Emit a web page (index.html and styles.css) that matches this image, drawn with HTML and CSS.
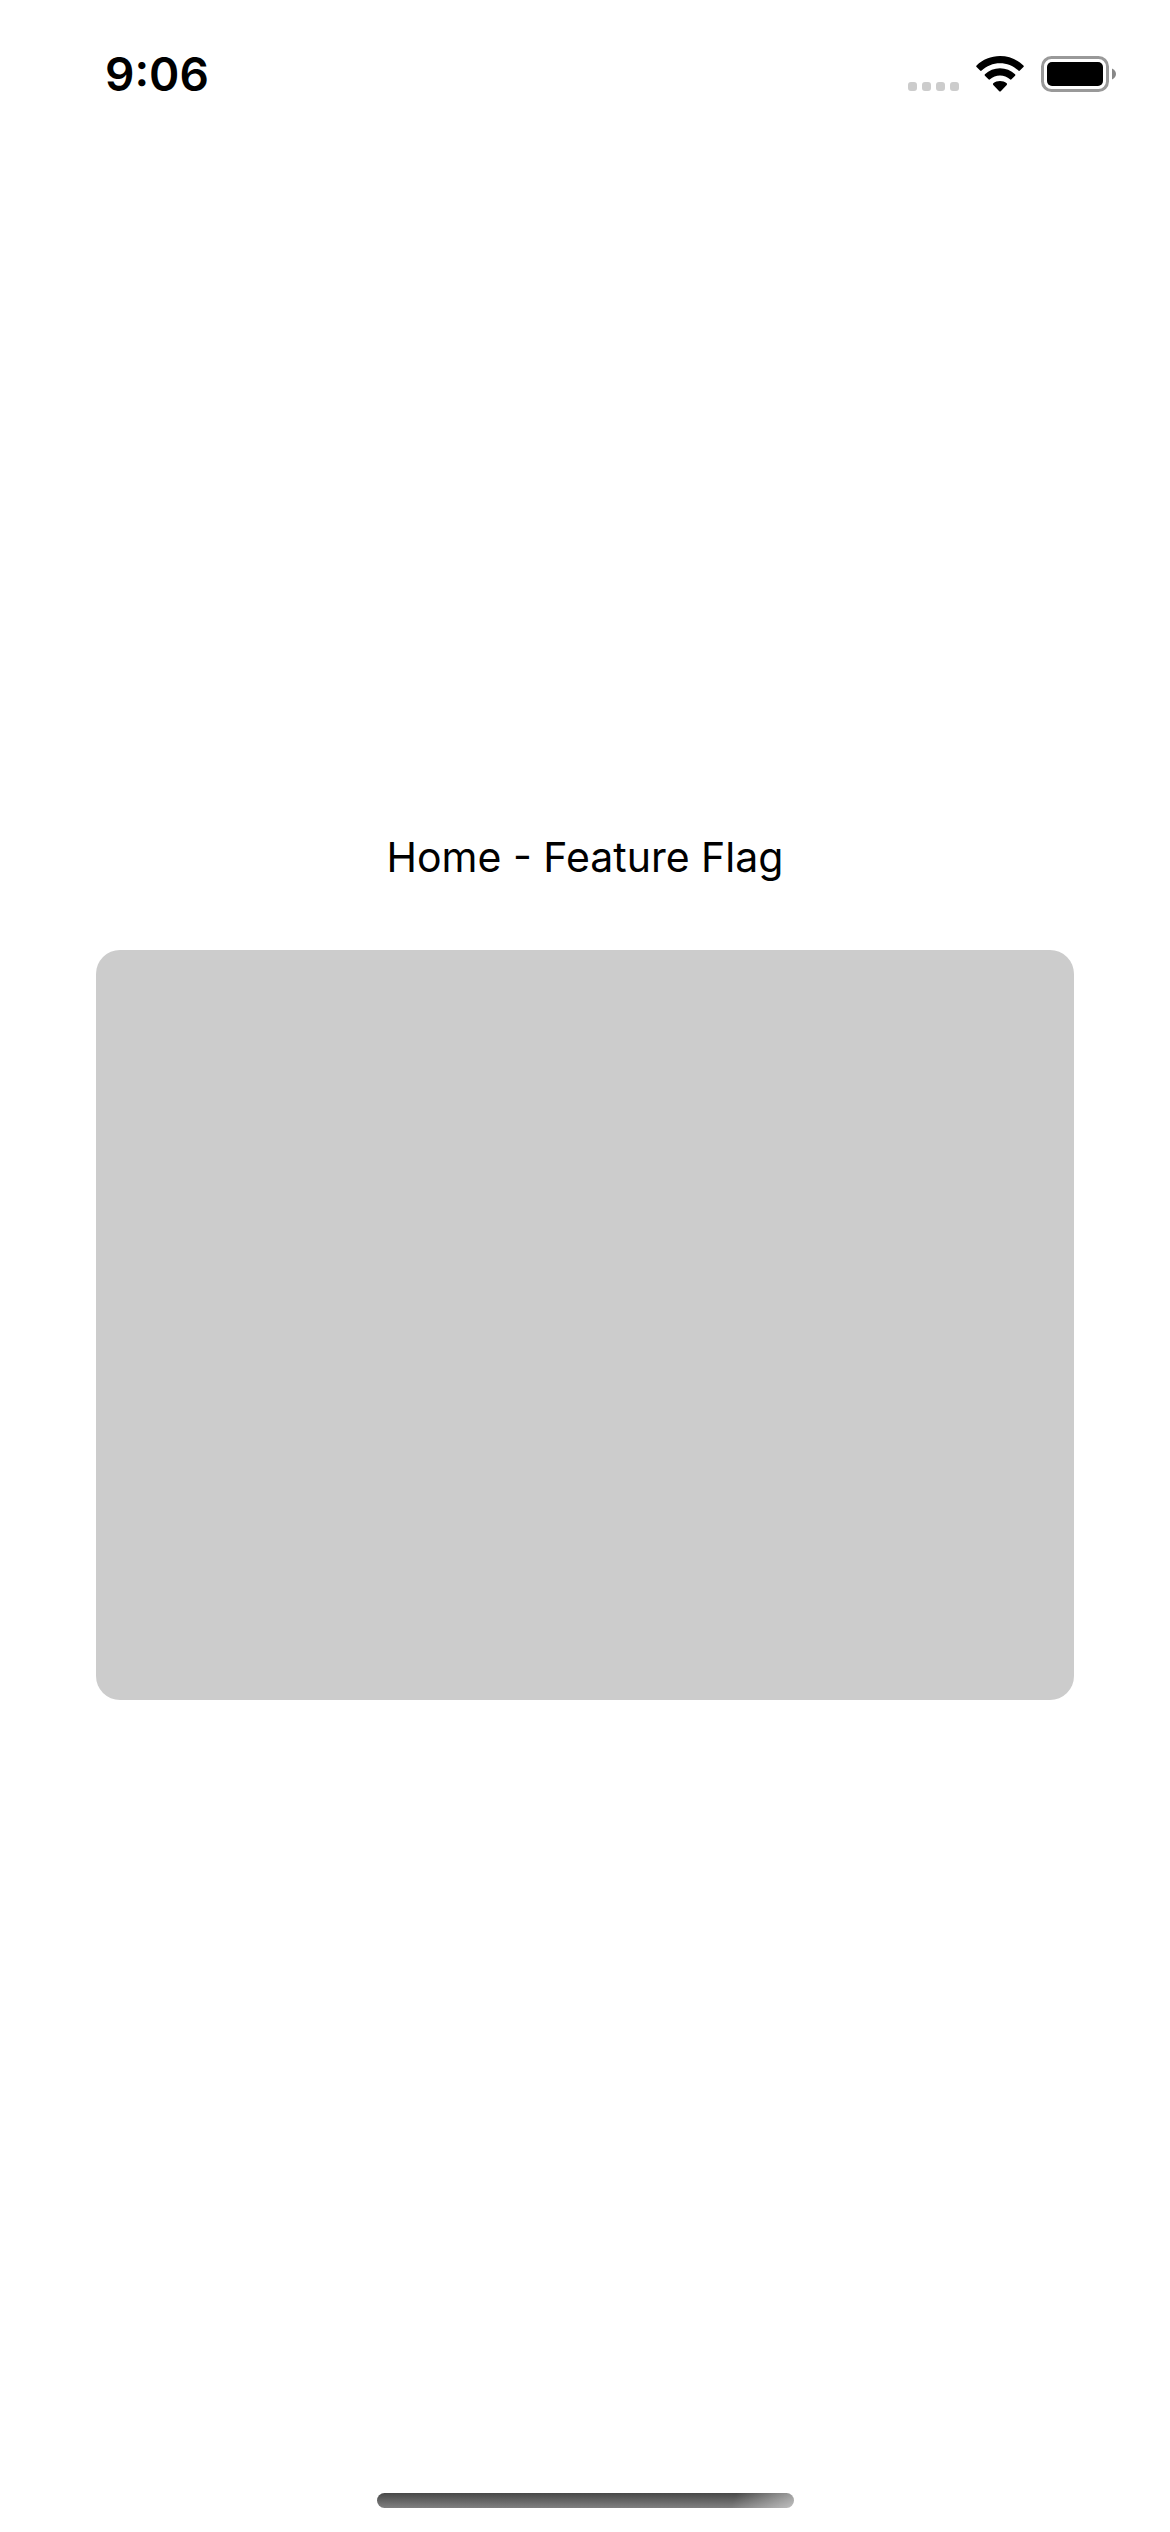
FILE: index.html
```html
<!DOCTYPE html>
<html lang="en">
<head>
  <meta charset="utf-8">
  <meta name="viewport" content="width=device-width, initial-scale=1">
  <title>Home - Feature Flag</title>
  <link rel="stylesheet" href="styles.css">
</head>
<body>
  <div class="screen">
    <header class="status-bar">
      <time class="clock" datetime="09:06">9:06</time>
      <div class="indicators">
        <svg class="signal" viewBox="0 0 51 10" role="img" aria-label="No cellular signal">
          <rect x="0" width="9" height="9" rx="3"/>
          <rect x="14" width="9" height="9" rx="3"/>
          <rect x="28" width="9" height="9" rx="3"/>
          <rect x="42" width="9" height="9" rx="3"/>
        </svg>
        <svg class="wifi" viewBox="0 0 50 37.500" role="img" aria-label="Wi-Fi">
          <path d="M25 0C34.300 0 43 3.600 49.400 9.900Q50.200 10.700 49.400 11.500L45.700 15.200Q44.900 15.900 44.100 15.200C39 10.300 32.200 7.500 25 7.500S11 10.300 5.900 15.200Q5.100 15.900 4.300 15.200L.600 11.500Q-.200 10.700 .600 9.900C7 3.600 15.700 0 25 0Z"/>
          <path d="M25 12.700C30.900 12.700 36.500 15 40.700 19Q41.500 19.800 40.700 20.600L37 24.200Q36.200 25 35.400 24.300C32.600 21.700 28.900 20.200 25 20.200S17.400 21.700 14.600 24.300Q13.800 25 13 24.200L9.300 20.600Q8.500 19.800 9.300 19C13.500 15 19.100 12.700 25 12.700Z"/>
          <path d="M25 26C27.600 26 30.100 26.800 32 28.500Q32.800 29.300 32 30.100L25.800 36.600Q25 37.300 24.200 36.600L18 30.100Q17.200 29.300 18 28.500C19.900 26.800 22.400 26 25 26Z"/>
        </svg>
        <svg class="battery" viewBox="0 0 75 36" role="img" aria-label="Battery full">
          <rect class="battery-shell" x="1.500" y="1.500" width="65" height="33" rx="9"/>
          <rect x="6" y="6" width="56" height="24" rx="5"/>
          <path class="battery-tip" d="M71 12.500C73.400 13.500 75 15.600 75 18S73.400 22.500 71 23.500Z"/>
        </svg>
      </div>
    </header>

    <main class="content">
      <h1 class="title">Home - Feature Flag</h1>
      <section class="card" aria-label="Feature content"></section>
    </main>

    <footer class="home-area">
      <div class="home-indicator"></div>
    </footer>
  </div>
</body>
</html>
```
FILE: styles.css
```css
* {
  box-sizing: border-box;
}

body {
  margin: 0;
  background: #fff;
  color: #000;
  font-family: Inter, "Liberation Sans", sans-serif;
}

.screen {
  display: grid;
  grid-template-rows: 120px 1fr 120px;
  min-height: 100vh;
}

.status-bar {
  display: flex;
  justify-content: space-between;
  align-items: flex-start;
  padding: 46px 54px 0 105px;
}

.clock {
  font-size: 46px;
  font-weight: 600;
  line-height: 56px;
}

.indicators {
  display: flex;
  align-items: flex-end;
  gap: 17px;
  padding-top: 10px;
}

.signal {
  width: 51px;
  height: 10px;
  fill: #ccc;
}

.wifi {
  width: 48px;
  height: 36px;
}

.battery {
  width: 75px;
  height: 36px;
}

.battery-shell {
  fill: none;
  stroke: #999;
  stroke-width: 3px;
}

.battery-tip {
  fill: #888;
}

.content {
  display: flex;
  flex-direction: column;
  justify-content: center;
  gap: 68px;
  padding: 0 96px;
}

.title {
  margin: 0;
  font-size: 41px;
  font-weight: 400;
  line-height: 50px;
  text-align: center;
}

.card {
  height: 750px;
  border-radius: 24px;
  background: #ccc;
}

.home-area {
  display: flex;
  justify-content: center;
  align-items: flex-end;
  padding-bottom: 24px;
}

.home-indicator {
  width: 417px;
  height: 15px;
  border-radius: 8px;
  background:
    linear-gradient(110deg, transparent 85%, rgba(255, 255, 255, 0.5) 100%),
    linear-gradient(#484848, #808080);
}
```
